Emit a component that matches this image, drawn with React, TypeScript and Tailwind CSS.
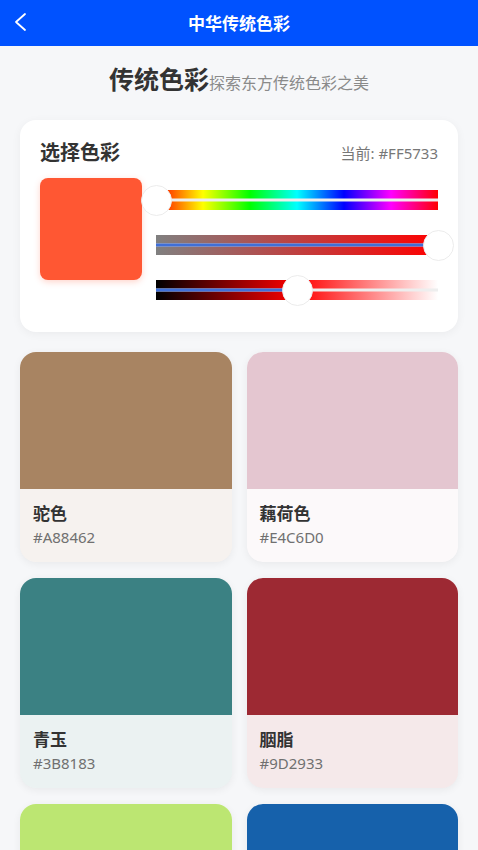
import React from 'react';

type Tone = { name: string; hex: string };

const tones: Tone[] = [
  { name: '驼色', hex: '#A88462' },
  { name: '藕荷色', hex: '#E4C6D0' },
  { name: '青玉', hex: '#3B8183' },
  { name: '胭脂', hex: '#9D2933' },
  { name: '松花色', hex: '#BCE672' },
  { name: '靛蓝', hex: '#1661AB' },
];

type SliderProps = {
  value: number; // 0..1
  gradient: string;
  fillLine: boolean;
};

// 滑块：渐变底条 + 中间轨道线 + 白色圆形拇指
const Slider: React.FC<SliderProps> = ({ value, gradient, fillLine }) => {
  const pct = value * 100;
  return (
    <div className="relative h-[30px] flex items-center">
      <div className={`relative h-5 w-full ${gradient}`}>
        <div className="absolute left-0 right-0 top-1/2 -translate-y-1/2 h-[3px] bg-[#eeeeee]" />
        {fillLine && (
          <div
            className="absolute left-0 top-1/2 -translate-y-1/2 h-[3px] bg-[#3f6fd8]"
            style={{ width: `${pct}%` }}
          />
        )}
      </div>
      <div
        className="absolute top-0 w-[31px] h-[31px] rounded-full bg-white border border-[#ececec]"
        style={{ left: `calc(${pct}% - 15px)` }}
      />
    </div>
  );
};

const App: React.FC = () => {
  return (
    <div className="min-h-screen bg-[#f6f7f9] font-['Noto_Sans','Noto_Sans_CJK_SC',sans-serif]">
      <header className="relative h-[46px] bg-[#0052ff] flex items-center justify-center pt-px">
        <svg
          className="absolute left-[14px] top-[12px]"
          width="13"
          height="20"
          viewBox="0 0 13 20"
          fill="none"
          stroke="white"
          strokeWidth="1.8"
          strokeLinecap="round"
          strokeLinejoin="round"
        >
          <polyline points="11,2 2,10 11,18" />
        </svg>
        <h1 className="text-[17px] font-bold text-white">中华传统色彩</h1>
      </header>

      <main className="px-5">
        <div className="flex items-baseline justify-center pt-[15px] pb-[23px]">
          <h2 className="text-[25px] leading-[36px] font-bold text-[#333333]">传统色彩</h2>
          <p className="text-[16px] text-[#8a8a8a]">探索东方传统色彩之美</p>
        </div>

        <section className="bg-white rounded-2xl shadow-[0_2px_10px_rgba(0,0,0,0.05)] px-5 pt-5 pb-[27px]">
          <div className="flex items-center justify-between h-[26px]">
            <h3 className="text-[20px] font-bold text-[#333333]">选择色彩</h3>
            <span className="text-[15px] text-[#777777]">当前: #FF5733</span>
          </div>
          <div className="flex mt-3 gap-[14px]">
            <div className="w-[102px] h-[102px] shrink-0 rounded-lg bg-[#ff5733] shadow-[0_2px_6px_rgba(255,87,51,0.25)]" />
            <div className="flex-1 flex flex-col gap-[15px] pt-[7px]">
              <Slider
                value={0}
                fillLine={false}
                gradient="bg-[linear-gradient(to_right,#ff0000,#ffff00,#00ff00,#00ffff,#0000ff,#ff00ff,#ff0000)]"
              />
              <Slider
                value={1}
                fillLine={true}
                gradient="bg-[linear-gradient(to_right,#808080,#ff0000)]"
              />
              <Slider
                value={0.5}
                fillLine={true}
                gradient="bg-[linear-gradient(to_right,#000000,#ff0000,#ffffff)]"
              />
            </div>
          </div>
        </section>

        <div className="grid grid-cols-2 gap-x-[15px] gap-y-4 mt-5 pb-5">
          {tones.map((t) => (
            <div
              key={t.hex}
              className="rounded-2xl overflow-hidden bg-white shadow-[0_2px_8px_rgba(0,0,0,0.06)]"
            >
              <div className="h-[137px]" style={{ backgroundColor: t.hex }} />
              <div className="px-[13px] pt-[13px] pb-[13px]" style={{ backgroundColor: `${t.hex}1A` }}>
                <p className="text-[17px] leading-[24px] font-bold text-[#333333]">{t.name}</p>
                <p className="text-[15px] leading-[23px] text-[#707070]">{t.hex}</p>
              </div>
            </div>
          ))}
        </div>
      </main>
    </div>
  );
};

export default App;
